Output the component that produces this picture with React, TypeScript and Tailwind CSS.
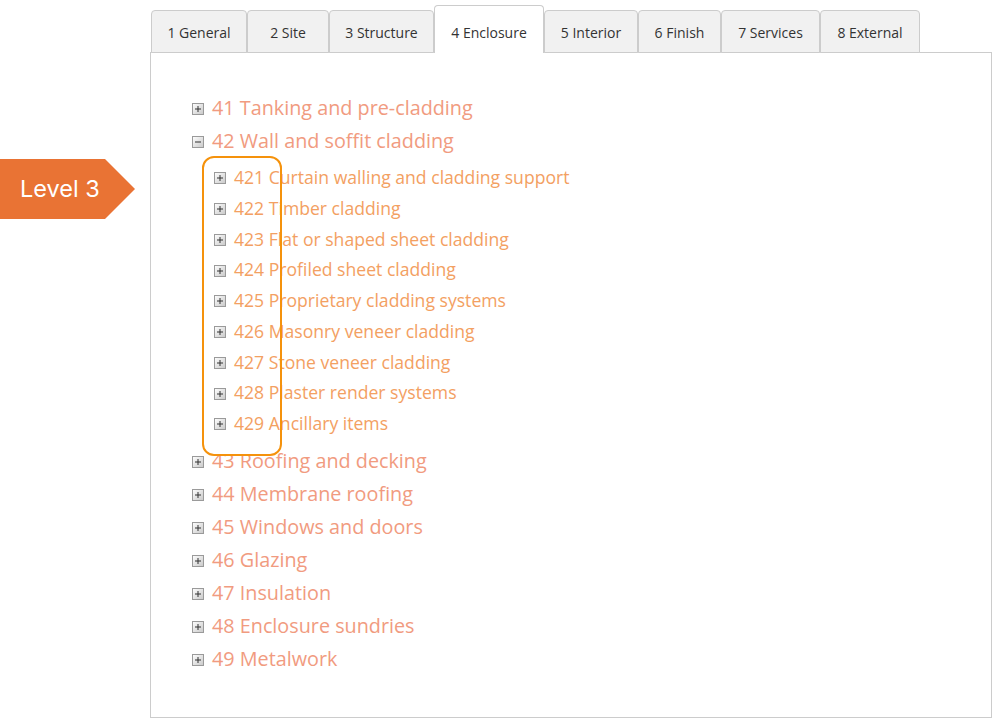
import React from "react";

const tabs = [
  { label: "1 General", w: 96 },
  { label: "2 Site", w: 82 },
  { label: "3 Structure", w: 105 },
  { label: "4 Enclosure", w: 110, active: true },
  { label: "5 Interior", w: 94 },
  { label: "6 Finish", w: 83 },
  { label: "7 Services", w: 99 },
  { label: "8 External", w: 100 },
];

const before = ["41 Tanking and pre-cladding"];
const open = "42 Wall and soffit cladding";
const children = [
  "421 Curtain walling and cladding support",
  "422 Timber cladding",
  "423 Flat or shaped sheet cladding",
  "424 Profiled sheet cladding",
  "425 Proprietary cladding systems",
  "426 Masonry veneer cladding",
  "427 Stone veneer cladding",
  "428 Plaster render systems",
  "429 Ancillary items",
];
const after = [
  "43 Roofing and decking",
  "44 Membrane roofing",
  "45 Windows and doors",
  "46 Glazing",
  "47 Insulation",
  "48 Enclosure sundries",
  "49 Metalwork",
];

const Toggle = ({ minus }: { minus?: boolean }) => (
  <svg width="12" height="12" viewBox="0 0 12 12" className="shrink-0">
    <defs>
      <linearGradient id={minus ? "gm" : "gp"} x1="0" y1="0" x2="1" y2="1">
        <stop offset="0" stopColor="#ffffff" />
        <stop offset="1" stopColor="#c8c8c8" />
      </linearGradient>
    </defs>
    <rect x="0.5" y="0.5" width="11" height="11" fill={`url(#${minus ? "gm" : "gp"})`} stroke="#9a9a9a" />
    <rect x="3" y="5.5" width="6" height="1" fill="#333" />
    {!minus && <rect x="5.5" y="3" width="1" height="6" fill="#333" />}
  </svg>
);

const TopItem = ({ label, minus }: { label: string; minus?: boolean }) => (
  <div className="flex items-center h-[33px] gap-[8px] text-[19.8px] text-[#f19b80]">
    <Toggle minus={minus} />
    <span className="-mt-[2px]">{label}</span>
  </div>
);

const SubItem = ({ label }: { label: string }) => (
  <div className="flex items-center h-[30.75px] gap-[8px] text-[17.6px] text-[#f3a062]">
    <Toggle />
    <span className="-mt-[2px]">{label}</span>
  </div>
);

export default function App() {
  return (
    <div className="w-[1000px] h-[727px] bg-white flex font-['Open_Sans',sans-serif] overflow-hidden">
      <div className="w-[150px] shrink-0 pt-[159px]">
        <div className="flex h-[60px]">
          <div className="w-[105px] bg-[#e97334] flex items-center pl-[20px] text-white text-[23.5px] font-['Inter',sans-serif]">
            Level 3
          </div>
          <svg width="30" height="60" viewBox="0 0 30 60" className="shrink-0">
            <polygon points="0,0 30,30 0,60" fill="#e97334" />
          </svg>
        </div>
      </div>
      <div className="w-[842px] shrink-0 flex flex-col">
        <div className="flex items-end h-[53px] pl-px -mb-px relative z-10">
          {tabs.map((t) => (
            <div
              key={t.label}
              style={{ width: t.w }}
              className={
                t.active
                  ? "h-[48px] pt-[6px] bg-white border border-b-0 border-[#cccccc] rounded-t-[4px] flex items-center justify-center text-[14px] text-[#333]"
                  : "h-[43px] pt-[1px] bg-[#f1f1f1] border border-[#cccccc] rounded-t-[4px] flex items-center justify-center text-[14px] text-[#333]"
              }
            >
              {t.label}
            </div>
          ))}
        </div>
        <div className="relative h-[666px] border border-[#cccccc] pl-[41px] pt-[39px]">
          {before.map((l) => (
            <TopItem key={l} label={l} />
          ))}
          <TopItem label={open} minus />
          <div className="pl-[22px] mt-[5px] mb-[6px]">
            {children.map((l) => (
              <SubItem key={l} label={l} />
            ))}
          </div>
          {after.map((l) => (
            <TopItem key={l} label={l} />
          ))}
          <div className="absolute left-[51px] top-[103px] w-[80px] h-[300px] border-[2.5px] border-[#f5920c] rounded-[12px]" />
        </div>
      </div>
    </div>
  );
}
